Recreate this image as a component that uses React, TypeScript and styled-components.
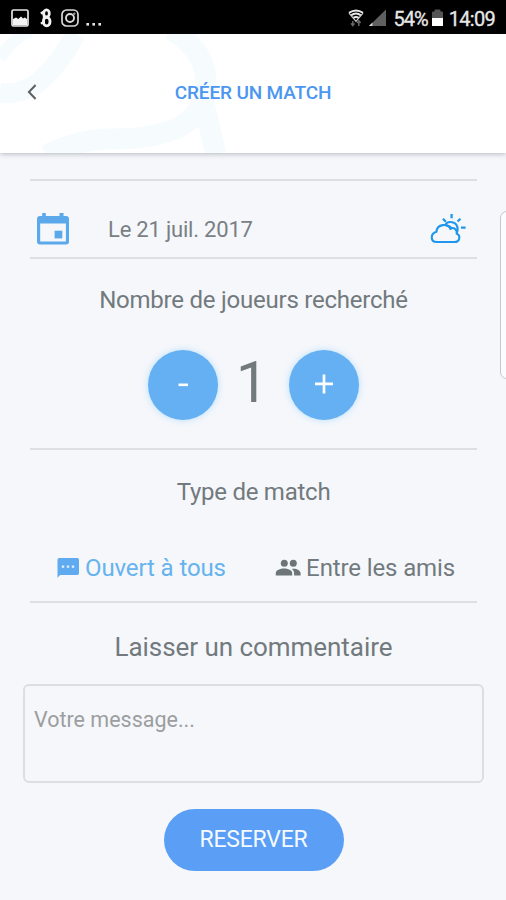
import React, { useState } from "react";
import styled, { createGlobalStyle } from "styled-components";

const GlobalStyle = createGlobalStyle`
  * { box-sizing: border-box; }
  html, body { margin: 0; padding: 0; background: #f5f7fb; }
  body { font-family: Roboto, "Liberation Sans", sans-serif; color: #727a7e; }
  button { font-family: inherit; border: 0; padding: 0; cursor: pointer; }
`;

const Screen = styled.main`
  position: relative;
  width: 506px;
  height: 900px;
  overflow: hidden;
  background: #f5f7fb;
  display: flex;
  flex-direction: column;
`;

const StatusBar = styled.div`
  height: 34px;
  flex: none;
  background: #000;
  color: #e8e8e8;
  display: flex;
  align-items: center;
  justify-content: space-between;
  padding: 2px 11px 0 10px;
`;

const StatusGroup = styled.div`
  display: flex;
  align-items: center;
  height: 32px;
`;

const StatusText = styled.span<{ $ml?: number; $spacing?: number }>`
  font-size: 20px;
  line-height: 32px;
  letter-spacing: ${(p) => p.$spacing ?? 0}px;
  margin-left: ${(p) => p.$ml ?? 0}px;
  padding-top: 2px;
  -webkit-text-stroke: 0.3px #e8e8e8;
`;

const Icon = styled.svg<{ $ml?: number }>`
  display: block;
  flex: none;
  margin-left: ${(p) => p.$ml ?? 0}px;
`;

const Header = styled.header`
  position: relative;
  z-index: 1;
  height: 119px;
  flex: none;
  background: #fff;
  box-shadow: 0 1px 5px rgba(40, 50, 60, 0.32);
  display: grid;
  grid-template-columns: 64px 1fr 64px;
  align-items: center;
`;

const HeaderArt = styled.svg`
  position: absolute;
  left: 0;
  top: 0;
`;

const BackButton = styled.button`
  position: relative;
  height: 119px;
  background: transparent;
  display: flex;
  align-items: center;
  justify-content: center;
  padding-bottom: 3px;
`;

const Title = styled.h1`
  position: relative;
  margin: 0;
  padding-bottom: 2px;
  text-align: center;
  font-size: 19px;
  font-weight: 500;
  letter-spacing: -0.15px;
  line-height: 24px;
  color: #4a96f0;
  white-space: nowrap;
`;

const Content = styled.div`
  flex: 1;
  padding: 26px 29px 0 30px;
  display: flex;
  flex-direction: column;
`;

const Divider = styled.hr`
  flex: none;
  width: 100%;
  height: 2px;
  margin: 0;
  border: 0;
  background: #dddfe3;
`;

const DateRow = styled.div`
  height: 76px;
  display: flex;
  align-items: center;
  padding: 20px 11px 0 4px;
`;

const DateText = styled.span`
  flex: 1;
  margin-left: 36px;
  font-size: 22px;
  letter-spacing: -0.2px;
  color: #797f83;
`;

const Section = styled.section<{ $height: number }>`
  height: ${(p) => p.$height}px;
  flex: none;
  display: flex;
  flex-direction: column;
  align-items: center;
`;

const Heading = styled.h2<{ $top: number; $size: number; $spacing?: number }>`
  margin: ${(p) => p.$top}px 0 0;
  height: 32px;
  font-size: ${(p) => p.$size}px;
  letter-spacing: ${(p) => p.$spacing ?? 0}px;
  line-height: 32px;
  font-weight: 400;
  white-space: nowrap;
`;

const Stepper = styled.div`
  margin-top: 34px;
  display: grid;
  grid-template-columns: 70px 71px 70px;
  align-items: center;
`;

const RoundButton = styled.button`
  width: 70px;
  height: 70px;
  border-radius: 50%;
  background: #64b0f2;
  box-shadow: 0 0 6px rgba(120, 200, 255, 0.5);
  display: flex;
  align-items: center;
  justify-content: center;
`;

const Count = styled.output`
  text-align: center;
  font-size: 57px;
  line-height: 66px;
  height: 70px;
  padding-right: 3px;
`;

const Choices = styled.div`
  margin-top: 44px;
  width: 100%;
  display: flex;
  padding: 0 22px 0 27px;
  justify-content: space-between;
`;

const Choice = styled.button<{ $active: boolean; $gap: number }>`
  display: flex;
  align-items: center;
  gap: ${(p) => p.$gap}px;
  height: 32px;
  background: transparent;
  font-size: 24px;
  letter-spacing: -0.12px;
  white-space: nowrap;
  color: ${(p) => (p.$active ? "#66b3ee" : "#727a7e")};
`;

const Message = styled.textarea`
  flex: none;
  width: 461px;
  height: 99px;
  margin: 21px 0 0;
  padding: 20px 9px;
  border: 2px solid #dcdee2;
  border-radius: 6px;
  background: transparent;
  resize: none;
  outline: none;
  font: 400 21.5px/28px Roboto, "Liberation Sans", sans-serif;
  color: #727a7e;
  &::placeholder { color: #9c9ea0; opacity: 1; }
`;

const Reserve = styled.button`
  flex: none;
  width: 180px;
  height: 62px;
  margin-top: 26px;
  border-radius: 31px;
  background: #5a9ef5;
  color: #f5faff;
  font-size: 23px;
  letter-spacing: -0.25px;
  line-height: 60px;
`;

const EdgeHandle = styled.div`
  position: absolute;
  left: 500px;
  top: 211px;
  width: 20px;
  height: 168px;
  border: 1px solid #c5c7ca;
  border-radius: 7px;
  background: #fbfcfd;
`;

const PhotoIcon = () => (
  <Icon $ml={1} width="18" height="18" viewBox="0 0 18 18">
    <rect x="1" y="1" width="16" height="16" rx="1.5" fill="none" stroke="#e6e6e6" strokeWidth="1.7" />
    <path d="M2 10 5 8.500l2.300 1.500L10 7.500l2 2 1.800-1L16 10v6.200H2z" fill="#f4f4f4" />
  </Icon>
);

const LoopIcon = () => (
  <Icon $ml={11} width="13" height="20" viewBox="0 0 13 20" fill="none" stroke="#f4f4f4">
    <path d="M.8 5.500 3.600 3.800M.8 15.500l3-1.300M3.900 4.800v10.500" strokeWidth="2.200" />
    <ellipse cx="6.500" cy="5.400" rx="2.800" ry="3.600" strokeWidth="2.800" />
    <ellipse cx="6.700" cy="13.600" rx="3.300" ry="4.300" strokeWidth="2.900" />
  </Icon>
);

const CameraIcon = () => (
  <Icon $ml={8} width="18" height="18" viewBox="0 0 18 18" fill="none" stroke="#d8d8d8">
    <rect x="1" y="1" width="16" height="16" rx="4.500" strokeWidth="1.700" />
    <circle cx="9" cy="9" r="4" strokeWidth="1.900" />
    <circle cx="13.300" cy="4.700" r=".7" strokeWidth="1" />
  </Icon>
);

const DotsIcon = () => (
  <Icon $ml={7} width="17" height="18" viewBox="0 0 17 18" fill="#e6e6e6">
    <rect x="0.400" y="14" width="2.600" height="2.600" />
    <rect x="6.400" y="14" width="2.600" height="2.600" />
    <rect x="12.400" y="14" width="2.600" height="2.600" />
  </Icon>
);

const WifiIcon = () => (
  <Icon width="16" height="18" viewBox="0 0 16 18" fill="none">
    <path d="M1 3.800Q8-1 15 3.800M3 6.300q5-3.400 10 0M5.300 8.900q2.700-1.800 5.400 0" stroke="#e8e8e8" strokeWidth="2" />
    <path d="M1 4.200 8 12.400l7-8.200" stroke="#ccc" strokeWidth="1.200" />
    <path d="M4.800 12v4.500M3 14.400l1.800 2.200 1.800-2.200M10.800 17v-4.500M9 14l1.800-2.200 1.800 2.200" stroke="#666" strokeWidth="1.500" />
  </Icon>
);

const SignalIcon = () => (
  <Icon $ml={5} width="18" height="18" viewBox="0 0 18 18">
    <path d="M17 .5V17H0z" fill="#606060" />
    <path d="M3.400 13.600V17H0z" fill="#ddd" />
  </Icon>
);

const BatteryIcon = () => (
  <Icon $ml={4} width="11" height="18" viewBox="0 0 11 18">
    <path d="M0 3.500Q0 2.500 1 2.500h1.500V1.500Q2.500.5 3.500.5h4q1 0 1 1v1H10q1 0 1 1V9H0z" fill="#555" />
    <path d="M0 9h11v8H0z" fill="#fff" />
  </Icon>
);

const ChevronIcon = () => (
  <Icon width="10" height="16" viewBox="0 0 10 16" fill="none">
    <path d="M8.600 1 1.900 8l6.700 7" stroke="#5b6063" strokeWidth="2" />
  </Icon>
);

const CalendarIcon = () => (
  <Icon width="38" height="38" viewBox="0 0 38 38">
    <path
      fillRule="evenodd"
      fill="#5ba8ea"
      d="M8.200 3h3.600v3h13.700V3h4v3H32a3 3 0 0 1 3 3v22.500a3 3 0 0 1-3 3H6a3 3 0 0 1-3-3V9a3 3 0 0 1 3-3h2.200zM6.200 13.500v18h25.700v-18z"
    />
    <path d="M20.600 20.700h7.700v7.700h-7.700z" fill="#5ba8ea" />
  </Icon>
);

const WeatherIcon = () => (
  <Icon width="36" height="32" viewBox="0 0 36 32" fill="none" stroke="#1f97ee">
    <path
      d="M6.500 29H24.500c5.500 0 6.300-6.800 2.200-8.200.8-4.800-3.500-6.900-6.300-5-2.200-5.700-13.600-5.200-13.900 3-6.400 1.600-6.200 10.200 0 10.200z"
      strokeWidth="2.100"
      strokeLinejoin="round"
    />
    <path d="M14.800 12.600c2.600-5.800 13-4.600 12.800 4 0 1.400-.3 2.300-.9 3.100M16 12.400c3.200.4 4.800 1.600 6 3.400" strokeWidth="2.100" />
    <path d="M21.600 1v4.300M12.900 5.700l3 3M30.400 5.700l-2.800 2.800M31 14.600h4.600" strokeWidth="2.300" />
  </Icon>
);

const MinusIcon = () => (
  <Icon width="30" height="30" viewBox="0 0 30 30">
    <path d="M10.500 14.800h9.500" stroke="#fff" strokeWidth="2.600" />
  </Icon>
);

const PlusIcon = () => (
  <Icon width="30" height="30" viewBox="0 0 30 30">
    <path d="M6 13.800h18M15 4.600v19" stroke="#fff" strokeWidth="2.700" />
  </Icon>
);

const ChatIcon = () => (
  <Icon width="22" height="22" viewBox="0 0 22 22">
    <path d="M2.200 1h18q1.800 0 1.800 1.800v13.400q0 1.800-1.800 1.800H3.200L.5 20.700V2.800Q.5 1 2.200 1z" fill="#60aaf0" />
    <path d="M4.800 8.500h2.400v2.200H4.800zM9.800 8.500h2.400v2.200H9.800zM14.800 8.500h2.400v2.200h-2.400z" fill="#dff0ff" />
  </Icon>
);

const PeopleIcon = () => (
  <Icon width="26" height="24" viewBox="0 0 26 24" fill="#6d7578">
    <circle cx="9.300" cy="7.200" r="3.500" />
    <circle cx="18.300" cy="7.200" r="3.500" />
    <path d="M.8 19.400v-2.200C.8 14.200 5.300 12.600 9 12.600s8.200 1.600 8.200 4.600v2.200z" />
    <path d="M16.800 12.900c4-.8 8.800 1.200 8.800 4.300v2.200h-6.500v-2.200c0-1.900-.9-3.300-2.300-4.300z" />
  </Icon>
);

export default function App() {
  const [players, setPlayers] = useState(1);
  const [open, setOpen] = useState(true);

  return (
    <Screen>
      <GlobalStyle />
      <StatusBar>
        <StatusGroup>
          <PhotoIcon />
          <LoopIcon />
          <CameraIcon />
          <DotsIcon />
        </StatusGroup>
        <StatusGroup>
          <WifiIcon />
          <SignalIcon />
          <StatusText $ml={7} $spacing={-1}>54%</StatusText>
          <BatteryIcon />
          <StatusText $ml={6} $spacing={-0.7}>14:09</StatusText>
        </StatusGroup>
      </StatusBar>
      <Header>
        <HeaderArt width="240" height="119" viewBox="0 0 240 119" fill="none" stroke="#f6fbfe">
          <path d="M0 59q26 2 42-14 18-16 34-45" strokeWidth="20" />
          <path d="M0 24Q12 5 30-3" strokeWidth="12" />
          <path d="M171-5q35 22 35 53 0 36-36 49-27 9-64 8-27 1-60 16M204 70l12 50" strokeWidth="21" />
        </HeaderArt>
        <BackButton aria-label="Retour">
          <ChevronIcon />
        </BackButton>
        <Title>CRÉER UN MATCH</Title>
      </Header>
      <Content>
        <Divider />
        <DateRow>
          <CalendarIcon />
          <DateText>Le 21 juil. 2017</DateText>
          <WeatherIcon />
        </DateRow>
        <Divider />
        <Section $height={189}>
          <Heading $top={25} $size={24} $spacing={-0.23}>Nombre de joueurs recherché</Heading>
          <Stepper>
            <RoundButton aria-label="Moins" onClick={() => setPlayers(Math.max(1, players - 1))}>
              <MinusIcon />
            </RoundButton>
            <Count>{players}</Count>
            <RoundButton aria-label="Plus" onClick={() => setPlayers(players + 1)}>
              <PlusIcon />
            </RoundButton>
          </Stepper>
        </Section>
        <Divider />
        <Section $height={151}>
          <Heading $top={26} $size={24} $spacing={-0.25}>Type de match</Heading>
          <Choices>
            <Choice $active={open} $gap={6} onClick={() => setOpen(true)}>
              <ChatIcon />
              Ouvert à tous
            </Choice>
            <Choice $active={!open} $gap={5} onClick={() => setOpen(false)}>
              <PeopleIcon />
              Entre les amis
            </Choice>
          </Choices>
        </Section>
        <Divider />
        <Section $height={290}>
          <Heading $top={28} $size={26} $spacing={-0.05}>Laisser un commentaire</Heading>
          <Message placeholder="Votre message..." />
          <Reserve>RESERVER</Reserve>
        </Section>
      </Content>
      <EdgeHandle />
    </Screen>
  );
}
